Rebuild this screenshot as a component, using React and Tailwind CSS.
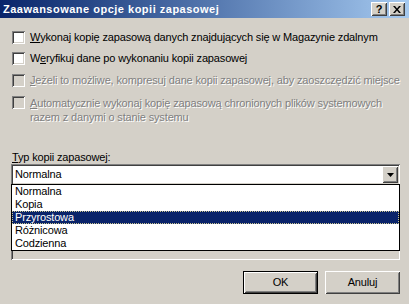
import React from "react";

const sunken =
  "shadow-[inset_1px_1px_0_#808080,inset_-1px_-1px_0_#ffffff,inset_2px_2px_0_#404040,inset_-2px_-2px_0_#d4d0c8]";
const raised =
  "shadow-[inset_1px_1px_0_#ffffff,inset_-1px_-1px_0_#404040,inset_2px_2px_0_#d4d0c8,inset_-2px_-2px_0_#808080]";

function Check({ disabled }) {
  return (
    <div
      className={`w-[13px] h-[13px] shrink-0 ${sunken} ${disabled ? "bg-[#d4d0c8]" : "bg-white"}`}
    />
  );
}

function Row({ disabled, children, className = "" }) {
  return (
    <div className={`flex items-start ml-[1px] ${className}`}>
      <Check disabled={disabled} />
      <div
        className={`ml-[5px] leading-[13px] whitespace-nowrap ${
          disabled ? "text-[#808080] [text-shadow:1px_1px_0_#ffffff]" : "text-black"
        }`}
      >
        {children}
      </div>
    </div>
  );
}

function TitleButton({ children }) {
  return (
    <div
      className={`w-[16px] h-[14px] bg-[#d4d0c8] ${raised} flex items-center justify-center text-black`}
    >
      {children}
    </div>
  );
}

export default function App() {
  return (
    <div className="w-[409px] h-[304px] bg-[#d4d0c8] relative overflow-hidden font-['Liberation_Sans',Arial,sans-serif] text-[11px] tracking-[-0.15px] text-black">
      {/* Title bar */}
      <div className="h-[18px] flex items-center bg-linear-to-r from-[#0a246a] to-[#a6caf0] pl-[3px] pr-[4px]">
        <div className="text-white font-bold text-[11px] tracking-[0.5px] leading-[14px] flex-1">
          Zaawansowane opcje kopii zapasowej
        </div>
        <div className="flex gap-[2px] items-center">
          <TitleButton>
            <span className="font-bold text-[11px] leading-[11px] tracking-normal">?</span>
          </TitleButton>
          <TitleButton>
            <svg width="8" height="7" viewBox="0 0 8 7">
              <path d="M0 0h2l2 2.5L6 0h2L5 3.5 8 7H6L4 4.5 2 7H0l3-3.5z" fill="#000" />
            </svg>
          </TitleButton>
        </div>
      </div>

      {/* Body */}
      <div className="pl-[11px] pr-[9px] flex flex-col">
        <Row className="mt-[13px]">
          <u>W</u>ykonaj kopię zapasową danych znajdujących się w Magazynie zdalnym
        </Row>
        <Row className="mt-[8px]">
          W<u>e</u>ryfikuj dane po wykonaniu kopii zapasowej
        </Row>
        <Row disabled className="mt-[9px]">
          <u>J</u>eżeli to możliwe, kompresuj dane kopii zapasowej, aby zaoszczędzić miejsce
        </Row>
        <Row disabled className="mt-[9px]">
          <div className="leading-[14px]">
            <u>A</u>utomatycznie wykonaj kopię zapasową chronionych plików systemowych
            <br />
            razem z danymi o stanie systemu
          </div>
        </Row>

        <div className="mt-[26px] ml-[1px] leading-[14px]">
          <u>T</u>yp kopii zapasowej:
        </div>

        {/* Combo */}
        <div className={`h-[21px] w-[389px] bg-white ${sunken} flex items-center relative`}>
          <div className="pl-[4px] leading-[13px] flex-1">Normalna</div>
          <div
            className={`absolute right-[2px] top-[2px] w-[16px] h-[17px] bg-[#d4d0c8] ${raised} flex items-center justify-center`}
          >
            <svg width="7" height="4" viewBox="0 0 7 4">
              <path d="M0 0h7L3.5 4z" fill="#000" />
            </svg>
          </div>
        </div>

        {/* Frame behind dropdown */}
        <div className={`h-[75px] w-[389px] ${sunken} bg-[#d4d0c8]`} />

        {/* Buttons */}
        <div className="mt-[11px] flex justify-end gap-[7px]">
          <div className="w-[75px] h-[23px] border border-black">
            <div className={`w-full h-full bg-[#d4d0c8] ${raised} flex items-center justify-center leading-[13px]`}>
              OK
            </div>
          </div>
          <div className={`w-[75px] h-[23px] bg-[#d4d0c8] ${raised} flex items-center justify-center leading-[13px]`}>
            Anuluj
          </div>
        </div>
      </div>

      {/* Dropdown list overlay */}
      <div className="absolute left-[11px] top-[184px] w-[389px] h-[67px] bg-white border border-black flex flex-col">
        <div className="h-[13px] leading-[13px] pl-[3px]">Normalna</div>
        <div className="h-[13px] leading-[13px] pl-[3px]">Kopia</div>
        <div className="h-[13px] leading-[13px] bg-[#0a246a] text-white border border-dotted border-[#c9c48f] pl-[2px] flex items-center">
          Przyrostowa
        </div>
        <div className="h-[13px] leading-[13px] pl-[3px]">Różnicowa</div>
        <div className="h-[13px] leading-[13px] pl-[3px]">Codzienna</div>
      </div>
    </div>
  );
}
